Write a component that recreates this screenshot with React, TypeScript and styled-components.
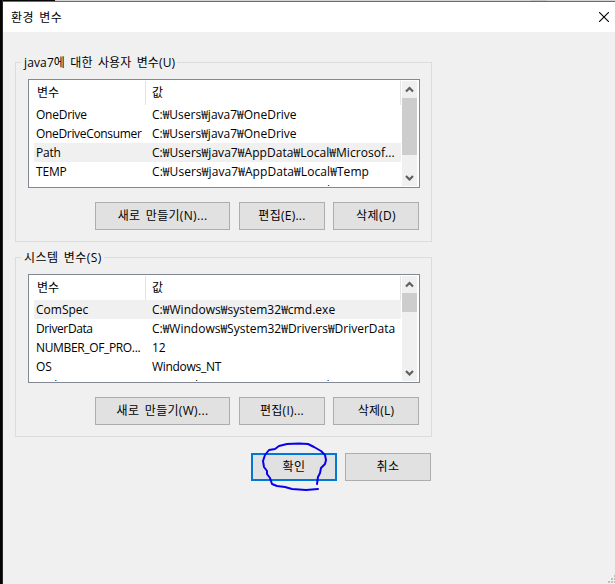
import React from "react";
import styled, { createGlobalStyle } from "styled-components";

const GlobalStyle = createGlobalStyle`
  * { box-sizing: border-box; }
  body {
    margin: 0;
    overflow: hidden;
    background: #f0f0f0;
    color: #000;
    font: 12px/19px "Open Sans", "Noto Sans CJK KR", sans-serif;
  }
`;

const Screen = styled.div`
  width: 615px;
  height: 584px;
  display: grid;
  grid-template: 2px 1fr / 3px 1fr;
  overflow: hidden;
`;

const DesktopEdge = styled.div`
  grid-row: 1 / 3;
  background: #050505;
  border-right: 1px solid #29292b;
`;

const TopEdge = styled.div`
  background: linear-gradient(90deg, #050505 52px, #d5d5d5 52px 528px, #c3c3c3 528px 544px, #d5d5d5 544px);
  border-bottom: 1px solid #6b6b6b;
`;

const Dialog = styled.div`
  position: relative;
  background: #f0f0f0;
`;

const TitleBar = styled.header`
  height: 30px;
  padding: 0 6px 0 8px;
  display: flex;
  align-items: center;
  justify-content: space-between;
  background: #fff;
`;

const CloseIcon = styled.svg`
  width: 10px;
  height: 10px;
  margin-top: -1px;
`;

const Label = styled.span<{ $spacing?: number }>`
  display: inline-block;
  white-space: pre;
  word-spacing: 2px;
  letter-spacing: ${(p) => p.$spacing ?? 0}px;
`;

const Content = styled.main`
  padding: 22px 0 0 12px;
  width: 429px;
`;

const Group = styled.fieldset`
  margin: 0 0 7px;
  padding: 8px 12px 11px;
  height: 188px;
  min-width: 0;
  border: 1px solid #dcdcdc;
`;

const GroupTitle = styled.legend`
  height: 17px;
  margin-left: -7px;
  padding: 0 2px 0 3px;
  line-height: 18px;
`;

const List = styled.div`
  height: 109px;
  margin-right: -1px;
  padding: 1px 1px 0 5px;
  display: flex;
  border: 1px solid #828790;
  background: #fff;
  overflow: hidden;
`;

const Table = styled.div`
  width: 367px;
  height: 105px;
  flex: none;
  overflow: hidden;
`;

const HeadRow = styled.div`
  height: 24px;
  display: grid;
  grid-template-columns: 112px 255px;
  line-height: 23px;
`;

const HeadCell = styled.div<{ $indent: number }>`
  padding-left: ${(p) => p.$indent}px;
  border-right: 1px solid #e3e3e3;
`;

const Row = styled.div<{ $selected?: boolean }>`
  height: 19px;
  display: grid;
  grid-template-columns: 116px 251px;
  padding-left: 2px;
  line-height: 19px;
  background: ${(p) => (p.$selected ? "#f0f0f0" : "transparent")};
`;

const ScrollBar = styled.div`
  width: 15px;
  height: 105px;
  margin-left: 1px;
  display: flex;
  flex-direction: column;
  justify-content: space-between;
  background: #f0f0f0;
`;

const Thumb = styled.div<{ $size: number }>`
  height: ${(p) => p.$size}px;
  margin-bottom: auto;
  background: #cdcdcd;
`;

const ArrowBox = styled.div`
  height: 17px;
  display: flex;
  align-items: center;
  justify-content: center;
`;

const Buttons = styled.div<{ $top: number; $inset?: number }>`
  margin-top: ${(p) => p.$top}px;
  padding-right: ${(p) => p.$inset ?? 0}px;
  display: flex;
  justify-content: flex-end;
  gap: 8px;
`;

const Button = styled.button<{ $width?: number; $primary?: boolean; $gap?: number }>`
  width: ${(p) => p.$width ?? 86}px;
  height: 28px;
  margin: 0 ${(p) => p.$gap ?? 0}px 0 0;
  padding: 0;
  border: ${(p) => (p.$primary ? "2px solid #0078d7" : "1px solid #adadad")};
  background: #e1e1e1;
  color: #000;
  font: inherit;
  line-height: 20px;
`;

const InkCircle = styled.svg`
  position: absolute;
  left: 257px;
  top: 438px;
  width: 70px;
  height: 54px;
  pointer-events: none;
`;

const SizeGrip = styled.svg`
  position: absolute;
  right: 0;
  bottom: 0;
  width: 8px;
  height: 9px;
`;

const Arrow = ({ down }: { down?: boolean }) => (
  <ArrowBox>
    <svg width="9" height="7" viewBox="0 0 9 7">
      <path
        d={down ? "M1 2 4.5 5.500 8 2" : "M1 5.500 4.5 2 8 5.500"}
        fill="none"
        stroke="#606060"
        strokeWidth="2.2"
      />
    </svg>
  </ArrowBox>
);

type Entry = { name: string; value: string; selected?: boolean; ns?: number; vs?: number };

const userVars: Entry[] = [
  { name: "OneDrive", value: "C:₩Users₩java7₩OneDrive", ns: -0.25 },
  { name: "OneDriveConsumer", value: "C:₩Users₩java7₩OneDrive", ns: -0.33 },
  { name: "Path", value: "C:₩Users₩java7₩AppData₩Local₩Microsof...", selected: true, ns: -0.2, vs: 0.05 },
  { name: "TEMP", value: "C:₩Users₩java7₩AppData₩Local₩Temp", ns: -0.2, vs: 0.08 },
  { name: "TMP", value: "C:₩Users₩java7₩AppData₩Local₩Temp", vs: 0.08 },
];

const systemVars: Entry[] = [
  { name: "ComSpec", value: "C:₩Windows₩system32₩cmd.exe", selected: true, vs: 0.04 },
  { name: "DriverData", value: "C:₩Windows₩System32₩Drivers₩DriverData", ns: -0.4 },
  { name: "NUMBER_OF_PRO...", value: "12", ns: -0.35 },
  { name: "OS", value: "Windows_NT", vs: -0.3 },
  { name: "Path", value: "C:₩Windows₩system32;C:₩Windows" },
];

const VariableList = ({ entries, thumb }: { entries: Entry[]; thumb: number }) => (
  <List>
    <Table>
      <HeadRow>
        <HeadCell $indent={3}>변수</HeadCell>
        <HeadCell $indent={6}>값</HeadCell>
      </HeadRow>
      {entries.map((e) => (
        <Row key={e.name} $selected={e.selected}>
          <span><Label $spacing={e.ns}>{e.name}</Label></span>
          <span><Label $spacing={e.vs}>{e.value}</Label></span>
        </Row>
      ))}
    </Table>
    <ScrollBar>
      <Arrow />
      <Thumb $size={thumb} />
      <Arrow down />
    </ScrollBar>
  </List>
);

export default function App() {
  return (
    <>
      <GlobalStyle />
      <Screen>
        <DesktopEdge />
        <TopEdge />
        <Dialog>
          <TitleBar>
            <Label $spacing={0.35}>환경 변수</Label>
            <CloseIcon viewBox="0 0 10 10">
              <path d="M0 0 10 10M10 0 0 10" stroke="#000" strokeWidth="1.1" />
            </CloseIcon>
          </TitleBar>
          <Content>
            <Group>
              <GroupTitle><Label $spacing={0.13}>java7에 대한 사용자 변수(U)</Label></GroupTitle>
              <VariableList entries={userVars} thumb={57} />
              <Buttons $top={14}>
                <Button $width={135} $gap={1}><Label $spacing={0.32}>새로 만들기(N)...</Label></Button>
                <Button><Label $spacing={0.25}>편집(E)...</Label></Button>
                <Button><Label $spacing={0.4}>삭제(D)</Label></Button>
              </Buttons>
            </Group>
            <Group>
              <GroupTitle><Label $spacing={0.4}>시스템 변수(S)</Label></GroupTitle>
              <VariableList entries={systemVars} thumb={19} />
              <Buttons $top={14}>
                <Button $width={135} $gap={1}><Label $spacing={0.32}>새로 만들기(W)...</Label></Button>
                <Button><Label $spacing={0.25}>편집(I)...</Label></Button>
                <Button><Label $spacing={0.25}>삭제(L)</Label></Button>
              </Buttons>
            </Group>
            <Buttons $top={16} $inset={1}>
              <Button $primary><Label $spacing={0.5}>확인</Label></Button>
              <Button><Label $spacing={0.5}>취소</Label></Button>
            </Buttons>
          </Content>
          <InkCircle viewBox="260 440 70 54">
            <path
              d="M317 484 318 477 320 473 321 468 325 464 326 460 325 455 321 451 314 447 308 444 299 443.500 287 444 279 446 275 449 269 450 265 455 263 461 264 467 267 471 267 474 270 478 272 484 277 486 285 487 292 489 306 490 318 489"
              fill="none"
              stroke="#0a00f0"
              strokeWidth="2"
              strokeLinecap="round"
              strokeLinejoin="round"
            />
          </InkCircle>
          <SizeGrip viewBox="0 0 8 9" shapeRendering="crispEdges">
            <path d="M7 0h1v2H7zM4 3h2v2H4zM7 3h1v2H7zM1 6h2v2H1zM4 6h2v2H4zM7 6h1v2H7z" fill="#bfbfbf" />
          </SizeGrip>
        </Dialog>
      </Screen>
    </>
  );
}
